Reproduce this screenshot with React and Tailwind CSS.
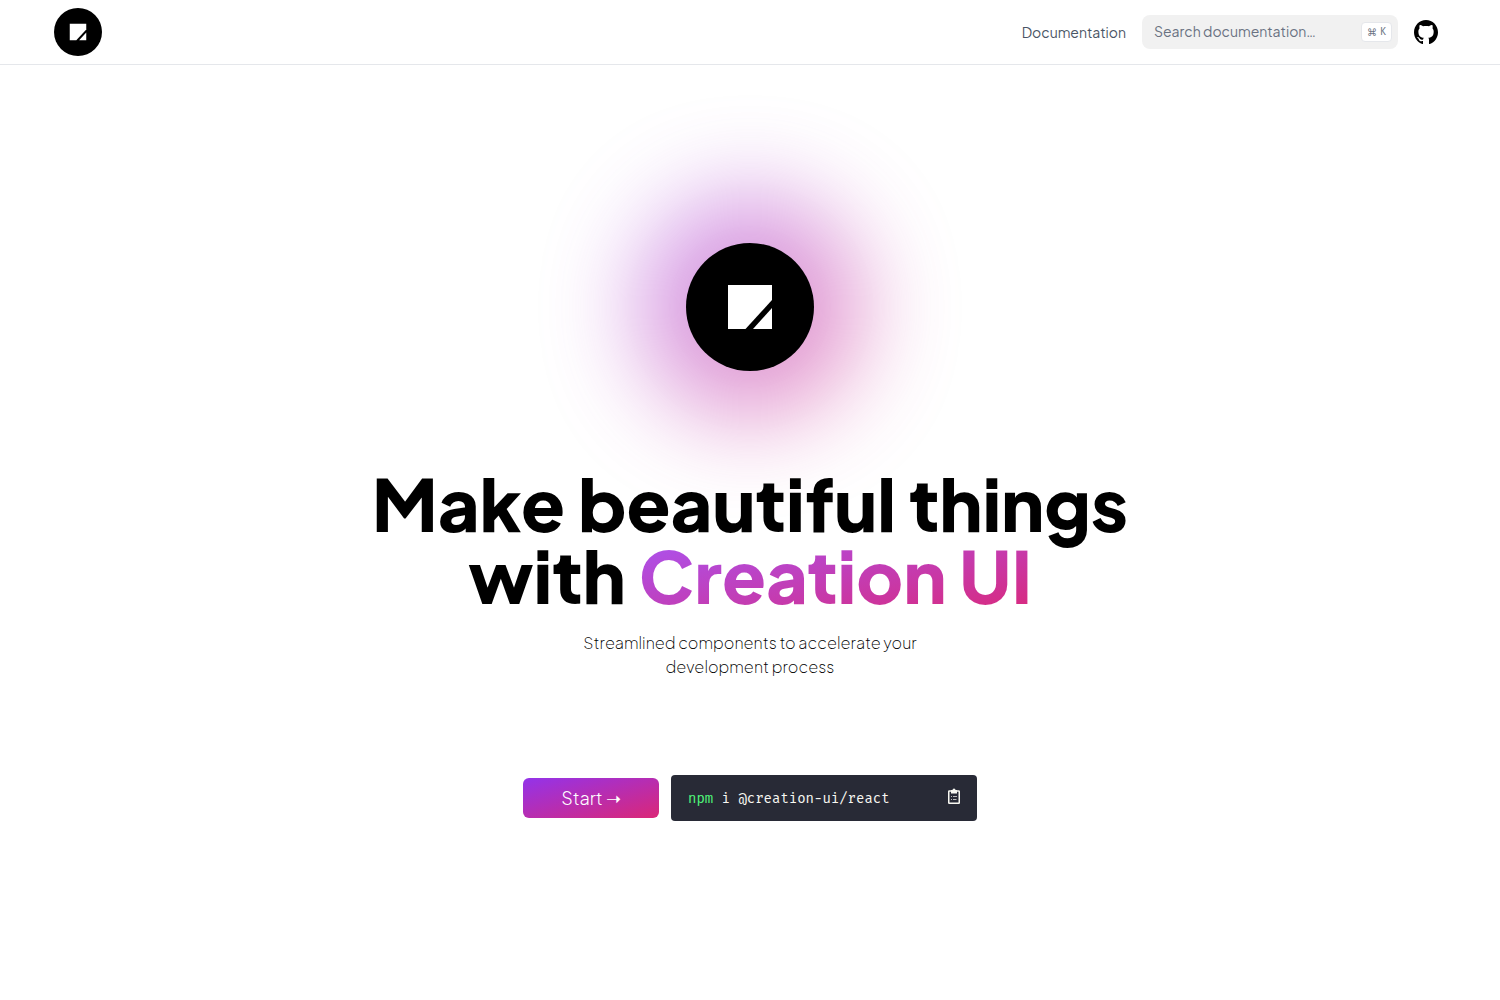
import React from "react";

function Logo({ className }) {
  return (
    <svg viewBox="0 0 128 128" className={className} role="img" aria-label="Creation UI">
      <circle cx="64" cy="64" r="64" fill="#000" />
      <path d="M42 42H86V57L59.500 86H42Z" fill="#fff" />
      <path d="M86 65V86H67Z" fill="#fff" />
    </svg>
  );
}

function GithubIcon() {
  return (
    <svg viewBox="3 3 18 18" className="size-6" fill="currentColor" aria-hidden="true">
      <path d="M12 3C7.0275 3 3 7.12937 3 12.2276C3 16.3109 5.57625 19.7597 9.15374 20.9824C9.60374 21.0631 9.77249 20.7863 9.77249 20.5441C9.77249 20.3249 9.76125 19.5982 9.76125 18.8254C7.5 19.2522 6.915 18.2602 6.735 17.7412C6.63375 17.4759 6.19499 16.6569 5.8125 16.4378C5.4975 16.2647 5.0475 15.838 5.80124 15.8264C6.51 15.8149 7.01625 16.4954 7.18499 16.7723C7.99499 18.1679 9.28875 17.7758 9.80625 17.5335C9.885 16.9337 10.1212 16.53 10.38 16.2993C8.3775 16.0687 6.285 15.2728 6.285 11.7432C6.285 10.7397 6.63375 9.9092 7.20749 9.26326C7.1175 9.03257 6.8025 8.08674 7.2975 6.81794C7.2975 6.81794 8.05125 6.57571 9.77249 7.76377C10.4925 7.55615 11.2575 7.45234 12.0225 7.45234C12.7875 7.45234 13.5525 7.55615 14.2725 7.76377C15.9937 6.56418 16.7475 6.81794 16.7475 6.81794C17.2424 8.08674 16.9275 9.03257 16.8375 9.26326C17.4113 9.9092 17.76 10.7281 17.76 11.7432C17.76 15.2843 15.6563 16.0687 13.6537 16.2993C13.98 16.5877 14.2613 17.1414 14.2613 18.0065C14.2613 19.2407 14.25 20.2326 14.25 20.5441C14.25 20.7863 14.4188 21.0746 14.8688 20.9824C16.6554 20.364 18.2079 19.1866 19.3078 17.6162C20.4077 16.0457 20.9995 14.1611 21 12.2276C21 7.12937 16.9725 3 12 3Z" />
    </svg>
  );
}

function ClipboardIcon() {
  return (
    <svg viewBox="0 0 12 16" className="h-4 w-3" fill="none" aria-hidden="true">
      <rect x="0.750" y="3" width="10.500" height="12.250" rx="0.500" stroke="#f8f8f2" strokeWidth="1.500" />
      <path d="M3 5.500V2H4.500A1.500 1.500 0 0 1 7.500 2H9V5.500Z" fill="#f8f8f2" />
      <path d="M3 8.500H4M5 8.500H9M3 11.500H4M5 11.500H8.500" stroke="#f8f8f2" strokeOpacity="0.700" />
    </svg>
  );
}

export default function App() {
  return (
    <div className="min-h-screen bg-white font-['Plus_Jakarta_Sans','Inter',sans-serif] text-black antialiased">
      <header className="border-b border-gray-200">
        <nav className="mx-auto flex h-16 max-w-[1440px] items-center gap-4 pr-8 pl-6">
          <a href="#home" className="mr-auto"><Logo className="size-12" /></a>
          <a href="#docs" className="text-sm text-gray-600">Documentation</a>
          <div className="relative w-64">
            <input
              type="search"
              aria-label="Search documentation"
              placeholder="Search documentation…"
              className="block h-[34px] w-full rounded-lg bg-[#f1f1f1] pr-10 pb-0.5 pl-3 text-sm placeholder:text-gray-500"
            />
            <kbd className="absolute top-[7px] right-1.5 flex h-5 items-center gap-[3px] rounded border border-gray-200 bg-white px-[5px] font-['Fira_Mono','Liberation_Mono',monospace] text-[10px] text-gray-500">
              <span className="font-['DejaVu_Sans',sans-serif]">⌘</span>
              <span>K</span>
            </kbd>
          </div>
          <a href="#github" aria-label="GitHub"><GithubIcon /></a>
        </nav>
      </header>

      <main className="flex flex-col items-center px-4 pt-[178px] text-center">
        <div className="relative size-32">
          <div className="absolute -inset-12 rounded-full bg-linear-to-br/srgb from-[#9333ea] to-[#db2777] opacity-50 blur-[48px]" />
          <Logo className="relative size-32" />
        </div>
        <h1 className="relative mt-24 text-[72px] leading-[72px] font-extrabold">
          Make beautiful things
          <br />
          with{" "}
          <span className="bg-linear-to-br/srgb from-[#a855f7] to-[#db2777] bg-clip-text text-transparent">Creation UI</span>
        </h1>
        <p className="mt-5 max-w-96 text-base font-extralight">
          Streamlined components to accelerate your
          <br />
          development process
        </p>
        <div className="mt-24 flex flex-wrap items-center justify-center gap-3">
          <button type="button" className="h-10 w-[136px] rounded-md bg-linear-to-br/srgb from-[#9333ea] to-[#db2777] text-lg font-light text-white">
            Start ➝
          </button>
          <div className="flex h-[46px] w-[306px] items-center justify-between rounded bg-[#282a36] px-[17px] text-[#f8f8f2]">
            <code className="pt-0.5 font-['Fira_Mono','Fira_Code',monospace] text-sm font-light">
              <span className="text-[#50fa7b]">npm</span> i @creation-ui/react
            </code>
            <button type="button" aria-label="Copy command" className="mb-1"><ClipboardIcon /></button>
          </div>
        </div>
      </main>
    </div>
  );
}
